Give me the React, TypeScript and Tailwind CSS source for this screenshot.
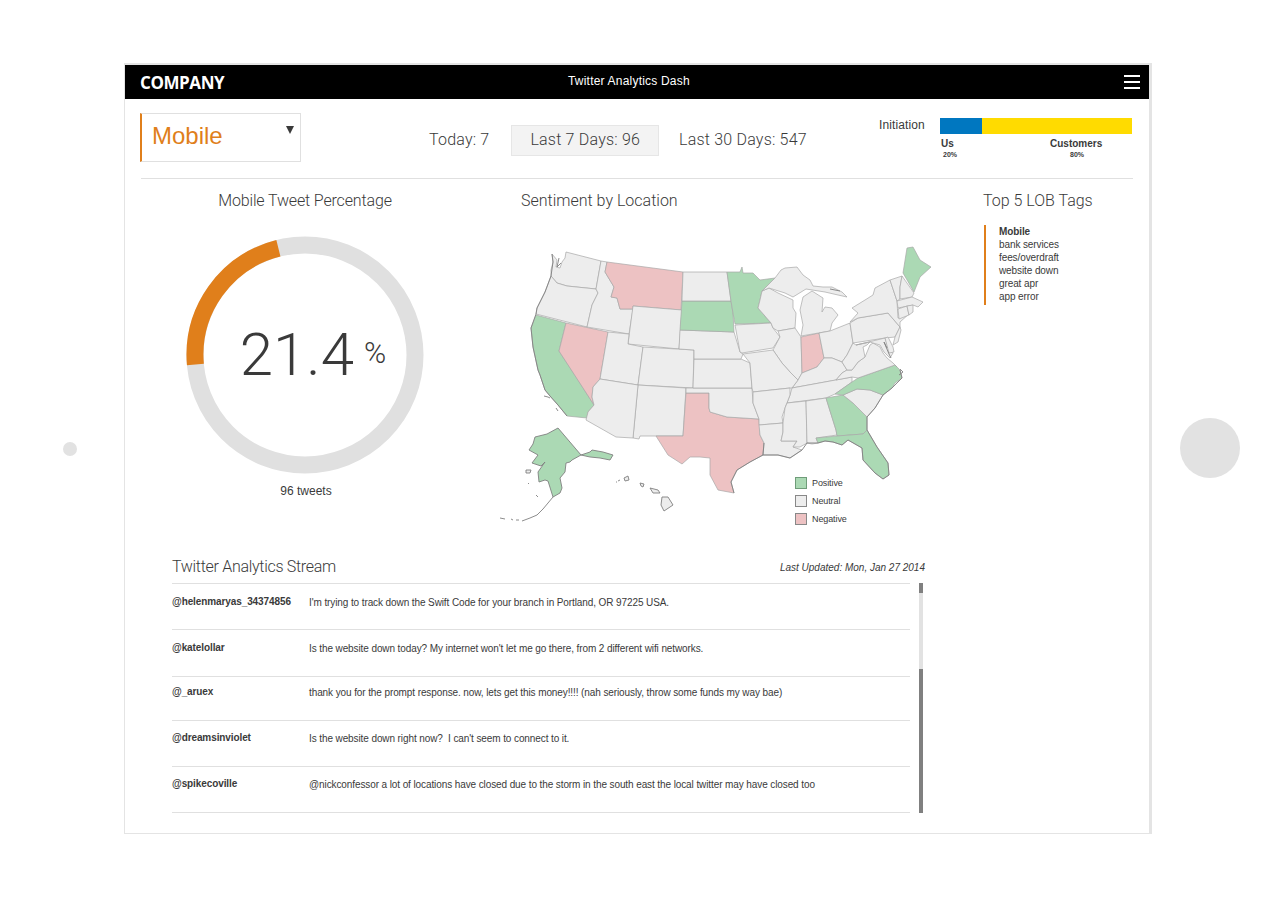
const G = "#abd9b4";
const R = "#edc2c3";
const N = "#ededed";

const states: [string, string][] = [
  [N, "552,254 553,262 551,270 551,276 557,283 567,286 596,289 601,261 566,252 565,258 562,262 560,268 556,267 557,260"],
  [N, "551,276 545,292 537,308 536,314 587,327 592,305 598,293 596,289 567,286 557,283"],
  [G, "536,315 566,323 559,351 575,375 594,405 588,412 587,418 567,416 558,405 550,396 545,390 540,375 538,370 533,347 531,328"],
  [R, "566,323 608,332 600,379 593,387 592,397 594,405 559,351"],
  [N, "601,261 607,262 605,272 614,287 611,297 617,298 620,309 633,309 629,334 587,327 592,305 598,293 596,289"],
  [R, "607,262 683,272 681,310 633,306 633,309 620,309 617,298 611,297 614,287 605,272"],
  [N, "633,306 682,310 679,349 628,344"],
  [N, "608,332 629,334 628,344 643,347 638,385 600,379"],
  [N, "643,347 694,350 693,388 638,385"],
  [N, "638,385 686,388 683,436 640,436 639,439 633,438"],
  [N, "600,379 638,385 633,438 616,437 586,420 588,412 594,405 592,397 593,387"],
  [R, "686,393 709,393 709,408 710,412 727,417 759,419 760,435 764,443 763,455 750,462 737,470 731,482 734,493 718,490 710,475 710,458 700,457 690,457 682,464 668,455 656,436 683,436"],
  [N, "686,388 752,388 753,403 759,419 727,417 710,412 709,408 709,393 686,393"],
  [N, "694,359 741,359 750,363 752,388 693,388"],
  [N, "680,330 734,332 740,352 743,354 741,359 694,359 694,350 679,349"],
  [G, "682,301 731,301 733,313 734,332 680,330"],
  [N, "683,272 727,272 731,301 682,301"],
  [G, "727,272 740,272 742,267 743,273 753,273 760,280 775,278 762,291 760,300 758,308 771,323 735,324 733,313 731,301"],
  [N, "735,325 771,323 773,328 780,337 773,348 742,353 740,352"],
  [N, "762,291 769,288 778,293 793,300 793,308 796,313 795,328 778,331 773,328 771,323 758,308 760,300"],
  [N, "778,331 795,328 801,337 802,373 798,380 790,372 782,363 773,350 780,337"],
  [R, "801,337 819,333 824,358 817,367 802,373"],
  [N, "801,336 830,331 832,323 838,315 832,308 825,307 822,312 823,298 812,291 803,297 800,310 803,325"],
  [N, "775,278 781,270 785,268 797,267 803,275 810,280 813,286 823,287 832,287 842,292 847,297 838,295 825,292 806,289 793,297 785,293 769,288 762,291"],
  [N, "830,331 850,323 853,343 847,355 842,362 832,358 824,358 819,333"],
  [N, "802,373 817,367 824,358 832,358 842,362 847,370 842,373 836,380 792,388 798,380"],
  [N, "743,354 773,350 782,363 790,372 798,380 792,388 790,388 753,392 752,388 750,363"],
  [N, "792,388 852,377 852,382 835,394 826,398 787,403 790,395"],
  [N, "753,392 790,388 790,395 785,408 782,417 783,423 759,425 759,419 753,403"],
  [N, "759,425 783,423 783,432 781,441 797,441 793,447 802,450 790,458 778,455 763,455 764,443 760,435"],
  [N, "787,403 806,401 807,443 800,447 793,447 797,441 781,441 783,432 783,423 785,408"],
  [N, "806,401 826,398 836,430 837,435 816,438 818,443 812,444 807,443"],
  [G, "826,398 843,395 853,403 867,417 867,430 863,434 837,436 836,430"],
  [G, "816,438 837,436 863,434 867,430 877,447 888,463 889,475 883,479 875,473 863,460 862,448 848,440 842,445 833,442 825,441 818,443"],
  [N, "843,395 857,389 870,390 883,395 875,408 867,417 853,403"],
  [G, "835,394 843,395 857,389 870,390 883,395 892,388 895,383 902,378 900,370 895,365 858,378 852,382"],
  [N, "842,373 847,370 852,370 858,362 865,357 870,345 873,343 880,347 883,353 887,358 893,363 897,367 895,365 858,378 852,377 836,380"],
  [N, "853,343 856,345 870,342 867,345 863,347 865,357 858,362 852,370 847,370 842,362 847,355"],
  [N, "850,323 858,318 888,313 900,327 895,337 885,338 853,343"],
  [N, "850,322 858,313 852,308 865,300 873,295 875,288 890,280 897,301 898,318 910,313 900,322 900,327 888,313 858,318"],
  [N, "890,280 902,276 900,287 900,299 897,301"],
  [N, "902,276 914,293 912,297 900,299 900,287"],
  [G, "903,273 907,248 913,247 920,260 931,267 920,277 914,292"],
  [N, "897,301 912,297 923,302 918,307 913,305 898,308"],
  [N, "898,309 907,306 909,315 899,319"],
  [N, "907,306 913,305 913,312 909,315"],
  [N, "900,327 901,330 898,342 893,345 895,337"],
  [N, "856,345 885,338 889,350 893,353 890,358 884,352 880,345 873,343 870,342"],
  [N, "885,338 888,337 893,347 894,352 889,353"],
];

const outlined: [string, string][] = [
  [G, "558,428 581,455 572,460 570,462 566,463 565,472 560,478 562,488 560,493 553,497 548,481 545,480 539,482 538,472 545,462 541,466 532,463 538,455 529,450 533,444 535,437 547,434"],
  [G, "581,455 590,452 592,450 603,452 613,455 610,460 600,458 590,457"],
  [N, "662,497 668,497 673,505 664,511 661,505"],
  [N, "624,478 628,476 629,480 625,481"],
  [N, "640,483 644,484 643,487 641,486"],
  [N, "650,488 658,490 660,493 653,493"],
  [N, "526,470 531,470 530,473 526,473"],
];

const details: string[] = [
  "M553 497 L548 503 L543 509 L537 515 L530 518 L522 521",
  "M519 520 L516 520 M513 520 L511 519 M505 519 L500 518",
  "M528 483 L529 484 M536 495 L538 497",
  "M618 481 L620 480 M616 482 L617 482",
  "M544 396 L548 397 L550 398 M556 408 L558 411",
  "M561 263 L557 267 L559 258",
  "M887 348 L884 342 L889 354 L891 358",
  "M900 369 L903 372 L899 375",
  "M840 291 L830 289",
  "M552 254 L553 262 L551 276 L545 292 L537 308 L536 314 L531 328 L533 347 L538 370 L540 375 L545 390 L550 396 L558 405 L567 416",
  "M764 443 L763 455 L750 462 L737 470 L731 482 L734 493",
  "M763 455 L778 455 L790 458 L802 450 L807 443 L818 443 L825 441 L833 442 L842 445 L848 440 L862 448 L863 460 L875 473 L883 479 L889 475 L888 463 L877 447 L867 430 L867 417 L875 408 L883 395 L892 388 L902 378 L900 370",
];

function UsMap() {
  return (
    <svg viewBox="493 241 440 290" className="h-[290px] w-[440px]">
      <g stroke="#a8a8a8" strokeWidth="0.7" strokeLinejoin="round">
        {states.map(([fill, points]) => (
          <polygon key={points} points={points} fill={fill} />
        ))}
      </g>
      <g stroke="#808080" strokeWidth="0.9" strokeLinejoin="round">
        {outlined.map(([fill, points]) => (
          <polygon key={points} points={points} fill={fill} />
        ))}
      </g>
      <g stroke="#808080" strokeWidth="0.9" fill="none">
        {details.map((d) => (
          <path key={d} d={d} />
        ))}
      </g>
    </svg>
  );
}

function Donut() {
  return (
    <svg viewBox="0 0 240 240" className="h-60 w-60">
      <circle cx="120" cy="120" r="110" fill="none" stroke="#e0e0e0" strokeWidth="17" />
      <path d="M10.4 129.6 A110 110 0 0 1 93.4 13.3" fill="none" stroke="#e07f1b" strokeWidth="17" />
    </svg>
  );
}

const tweets = [
  { name: "@helenmaryas_34374856", text: "I'm trying to track down the Swift Code for your branch in Portland, OR 97225 USA.", h: "h-11.5 pt-2.5" },
  { name: "@katelollar", text: "Is the website down today? My internet won't let me go there, from 2 different wifi networks.", h: "h-11.75 pt-2.5" },
  { name: "@_aruex", text: "thank you for the prompt response. now, lets get this money!!!! (nah seriously, throw some funds my way bae)", h: "h-11 pt-1.75" },
  { name: "@dreamsinviolet", text: "Is the website down right now?  I can't seem to connect to it.", h: "h-11.5 pt-2.25" },
  { name: "@spikecoville", text: "@nickconfessor a lot of locations have closed due to the storm in the south east the local twitter may have closed too", h: "h-11.5 pt-2.25" },
];

const legend = [
  { label: "Positive", box: "bg-[#abd9b4] border-[#6f9c79]" },
  { label: "Neutral", box: "bg-[#ededed] border-[#888888]" },
  { label: "Negative", box: "bg-[#edc2c3] border-[#888888]" },
];

const light = "font-['Roboto',sans-serif] font-light";

export default function App() {
  return (
    <div className="relative h-[900px] bg-white pt-15.75 font-['Liberation_Sans',Arial,sans-serif] text-[#3a3a3a]">
      <div className="absolute left-[63px] top-[442px] h-3.5 w-3.5 rounded-full bg-[#e2e2e2]" />
      <div className="absolute left-[1180px] top-[418px] h-15 w-15 rounded-full bg-[#e2e2e2]" />

      <div className="ml-31 h-[771px] w-257 border-b border-l border-r-3 border-t-2 border-[#e4e4e4]">
        <header className="flex h-8.5 items-center bg-black pl-3.5 pr-2.25 text-white">
          <div className="mt-0.5 w-107.25 pl-px font-['Open_Sans',sans-serif] text-[17px] font-bold tracking-tight">COMPANY</div>
          <div className="pb-0.5 text-xs tracking-[0.2px]">Twitter Analytics Dash</div>
          <div className="ml-auto flex flex-col gap-1">
            <div className="h-0.5 w-4 bg-white" />
            <div className="h-0.5 w-4 bg-white" />
            <div className="h-0.5 w-4 bg-white" />
          </div>
        </header>

        <section className="mx-4 flex h-20 items-start border-b border-[#e0e0e0] pt-3.5">
          <div className="-ml-px flex h-12.25 w-40.25 items-start justify-between border border-l-2 border-[#e0e0e0] border-l-[#e07f1b] pl-2.5 pr-1.5">
            <span className="pt-1.5 text-2xl text-[#e07f1b]">Mobile</span>
            <svg viewBox="0 0 8 8" className="mt-3 h-2 w-2 fill-[#3a3a3a]">
              <path d="M0 0 H8 L4 8 Z" />
            </svg>
          </div>
          <div className={`ml-32 mt-3 flex items-center text-base tracking-[0.2px] ${light}`}>
            <span className="pb-0.5">Today: 7</span>
            <span className="ml-5.5 flex h-7.75 items-center border border-[#e6e6e6] bg-[#f3f3f3] px-4.5 pb-0.5">Last 7 Days: 96</span>
            <span className="ml-5 pb-0.5">Last 30 Days: 547</span>
          </div>
          <div className="ml-auto mr-px flex pt-1.25">
            <span className="w-15.25 text-xs leading-3.5 tracking-[0.1px]">Initiation</span>
            <div className="w-48">
              <div className="flex h-4">
                <div className="w-10.5 bg-[#0077c0]" />
                <div className="flex-1 bg-[#ffdb00]" />
              </div>
              <div className="mt-1 flex text-[10px] font-bold leading-3">
                <div className="w-27.5 pl-px">
                  <div>Us</div>
                  <div className="pl-0.5 text-[7px] leading-2.5">20%</div>
                </div>
                <div>
                  <div>Customers</div>
                  <div className="pl-5 text-[7px] leading-2.5">80%</div>
                </div>
              </div>
            </div>
          </div>
        </section>

        <section className="flex h-88 pl-15">
          <div className="w-60">
            <h2 className={`pt-2.5 text-center text-base leading-6 tracking-[-0.15px] ${light}`}>Mobile Tweet Percentage</h2>
            <div className="relative mt-5.5">
              <Donut />
              <div className={`absolute inset-0 flex items-center justify-center pl-4 ${light}`}>
                <span className="text-6xl">21.4</span>
                <span className="mb-1 ml-2.5 text-3xl">%</span>
              </div>
            </div>
            <div className="mt-2 pl-0.5 text-center text-xs leading-4">96 tweets</div>
          </div>

          <div className="relative ml-17 w-110">
            <h2 className={`pl-7 pt-2.5 text-base leading-6 ${light}`}>Sentiment by Location</h2>
            <div className="mt-7">
              <UsMap />
            </div>
            <div className="absolute left-75.5 top-74.5 flex flex-col gap-1.5 text-[9px] leading-3 tracking-[-0.1px]">
              {legend.map((item) => (
                <div key={item.label} className="flex items-center gap-1.25">
                  <div className={`h-3 w-3 border ${item.box}`} />
                  <span>{item.label}</span>
                </div>
              ))}
            </div>
          </div>

          <div className="ml-12.5 pt-2.5">
            <h2 className={`text-base leading-6 ${light}`}>Top 5 LOB Tags</h2>
            <div className="ml-px mt-3 flex flex-col border-l-2 border-[#e07f1b] pb-0.5 pl-3.25 text-[10px] leading-3.25 tracking-[-0.1px]">
              <span className="font-bold">Mobile</span>
              <span>bank services</span>
              <span>fees/overdraft</span>
              <span>website down</span>
              <span>great apr</span>
              <span>app error</span>
            </div>
          </div>
        </section>

        <section className="ml-11.75 mt-5.5 w-188.25">
          <div className="flex items-center justify-between pb-1">
            <h2 className={`pt-0.5 text-base leading-6 tracking-[-0.3px] ${light}`}>Twitter Analytics Stream</h2>
            <span className="pt-0.5 text-[10px] italic">Last Updated: Mon, Jan 27 2014</span>
          </div>
          <div className="flex">
            <div className="w-184.5 border-t border-[#e0e0e0]">
              {tweets.map((t) => (
                <div key={t.name} className={`flex whitespace-pre border-b border-[#e0e0e0] text-[10px] leading-4 tracking-[-0.1px] ${t.h}`}>
                  <div className="w-34.25 font-bold">{t.name}</div>
                  <div className="pt-px">{t.text}</div>
                </div>
              ))}
            </div>
            <div className="ml-2.25 flex w-1 flex-col">
              <div className="h-2.5 bg-[#808080]" />
              <div className="h-19 bg-[#e2e2e2]" />
              <div className="flex-1 bg-[#808080]" />
            </div>
          </div>
        </section>
      </div>
    </div>
  );
}
